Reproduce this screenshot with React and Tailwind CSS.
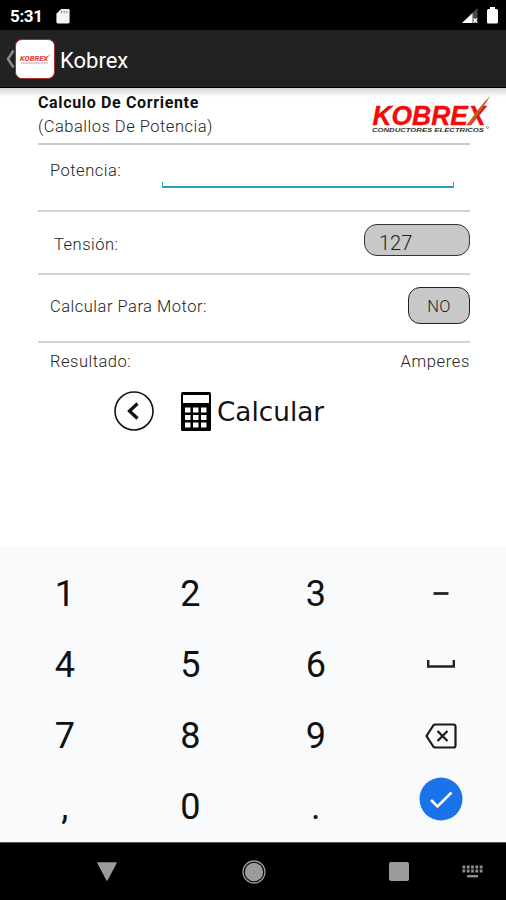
function StatusBar() {
    return (
        <div className="flex h-[30px] items-center bg-black pt-px pl-[10px] pr-[8px] text-white">
            <span className="w-[46px] text-[17px] leading-[20px] font-bold tracking-[-0.020em]">5:31</span>

            <svg className="h-[16px] w-[14px]" viewBox="0 0 14 17">
                <path d="M5 1H12.5Q14 1 14 2.500V15Q14 16.500 12.500 16.500H1.500Q0 16.500 0 15V6Z" fill="#f4f4f4" />
                <path d="M5.500 3V5.500M8.300 3V5.500M11 3V5.500" stroke="#777" strokeWidth="1" />
            </svg>

            <div className="ml-auto flex gap-[9px]">
                <svg className="h-[17px] w-[16px]" viewBox="0 0 16 17">
                    <path d="M15.500 1V16H0Z" fill="#4a4a4a" />
                    <path d="M10.500 6V16H0Z" fill="#fff" />
                    <path d="M11.500 11.500L15 15.500M15 11.500L11.500 15.500" stroke="#fff" strokeWidth="1.500" />
                </svg>

                <svg className="h-[17px] w-[11px]" viewBox="0 0 11 17">
                    <path d="M3 0H8V2H9.500Q11 2 11 3.500V15Q11 16.500 9.500 16.500H1.500Q0 16.500 0 15V3.500Q0 2 1.500 2H3Z" fill="#fff" />
                </svg>
            </div>
        </div>
    )
}

function AppBar() {
    return (
        <header className="flex h-[58px] items-center border-b border-b-black bg-[#222222] pl-[5px] text-white">
            <svg className="h-[20px] w-[10px]" viewBox="0 0 10 20">
                <path d="M8.500 1.500L3 10L8.500 18.500" fill="none" stroke="#8a8a8a" strokeWidth="2.500" />
            </svg>

            <div className="flex h-[40px] w-[40px] items-center justify-center rounded-[7px] border border-[#a83228] bg-white">
                <svg className="h-[12px] w-[32px]" viewBox="0 0 32 12">
                    <text x="1" y="8" textLength="28" lengthAdjust="spacingAndGlyphs" fontSize="8" fontWeight="bold" fontStyle="italic" fill="#e5383b">KOBREX</text>
                    <path d="M2 10H29" stroke="#999" strokeWidth="0.800" />
                    <path d="M26 7.500L31 1" stroke="#c98a55" strokeWidth="0.800" />
                </svg>
            </div>

            <h1 className="ml-[5px] pt-[4px] text-[22px] leading-[28px]">Kobrex</h1>
        </header>
    )
}

function Logo() {
    return (
        <svg className="mt-[6px] h-[40px] w-[126px] overflow-visible" viewBox="0 0 126 40" fontFamily="Liberation Sans">
            <text x="4.500" y="30.500" textLength="113" lengthAdjust="spacingAndGlyphs" fontSize="28" fontWeight="bold" fontStyle="italic" fill="#f5090b" stroke="#f5090b" strokeWidth="0.400">KOBREX</text>
            <path d="M99.500 31Q109 15 122.500 1.500Q114 16 102 31Z" fill="#bd681c" />
            <text x="4" y="37.500" textLength="112" lengthAdjust="spacingAndGlyphs" fontSize="5.500" fontWeight="bold" fontStyle="italic" fill="#333">CONDUCTORES ELECTRICOS</text>
            <circle cx="119.500" cy="33.500" r="1" fill="none" stroke="#555" strokeWidth="0.700" />
        </svg>
    )
}

function Form() {
    return (
        <main className="h-[458px] bg-linear-to-b from-[#d5d5d5] to-white to-[9px] pl-[38px]">
            <div className="mr-[36px] flex h-[57px] justify-between border-b-2 border-[#cbcbcb]">
                <div className="pt-[3px] leading-[24px]">
                    <h2 className="text-[16px] font-bold tracking-[0.650px] text-[#111]">Calculo De Corriente</h2>
                    <p className="text-[16.500px] font-light tracking-[0.500px] text-[#222]">(Caballos De Potencia)</p>
                </div>
                <div className="mr-[-24px]">
                    <Logo />
                </div>
            </div>

            <div className="mr-[36px] flex h-[67px] justify-between border-b-2 border-[#d2d2d2] pr-[16px] pl-[12px] text-[#222]">
                <label className="pt-[14px] text-[16.500px] leading-[24px] font-light tracking-[0.500px]">Potencia:</label>
                <div className="mt-[37px] h-[6px] w-[292px] border-x border-b-2 border-[#2d9fc3]"></div>
            </div>

            <div className="mr-[36px] flex h-[63px] justify-between border-b-2 border-[#d2d2d2] pl-[16px] text-[#222]">
                <span className="pt-[21px] text-[16.500px] leading-[24px] font-light tracking-[0.500px]">Tensión:</span>
                <div className="mt-[12px] h-[32px] w-[106px] rounded-[13px] border border-[#333] bg-[#c8c8c8] pt-[5px] pl-[14px] text-[20px] leading-[26px] font-light">127</div>
            </div>

            <div className="mr-[36px] flex h-[68px] justify-between border-b-2 border-[#d2d2d2] pl-[12px] text-[#222]">
                <span className="pt-[20px] text-[16.500px] leading-[24px] font-light tracking-[0.500px]">Calcular Para Motor:</span>
                <button className="mt-[12px] h-[37px] w-[62px] rounded-[12px] border border-[#222] bg-[#c8c8c8] pt-[3px] text-[16.500px] font-light tracking-[0.200px]">NO</button>
            </div>

            <div className="mr-[36px] flex justify-between pt-[7px] pl-[12px] text-[16.500px] leading-[24px] font-light tracking-[0.500px] text-[#222]">
                <span>Resultado:</span>
                <span className="tracking-[0.650px]">Amperes</span>
            </div>

            <div className="mt-[17px] flex items-center pl-[76px]">
                <svg className="h-[40px] w-[40px]" viewBox="0 0 40 40" fill="none" stroke="#111">
                    <circle cx="20" cy="20" r="19" strokeWidth="1.600" />
                    <path d="M23.500 12.500L15.500 20L23.500 27.500" strokeWidth="3.200" />
                </svg>

                <svg className="ml-[27px] h-[39px] w-[30px]" viewBox="0 0 30 39">
                    <rect width="30" height="39" rx="1.500" fill="#000" />
                    <path d="M2 3H28V11H2ZM4 15.500H9.500V20.500H4ZM12 15.500H17.500V20.500H12ZM20 15.500H25.500V20.500H20ZM4 23H9.500V28H4ZM12 23H17.500V28H12ZM20 23H25.500V28H20ZM4 30.500H9.500V35.500H4ZM12 30.500H17.500V35.500H12ZM20 30.500H25.500V35.500H20Z" fill="#fff" />
                </svg>

                <span className="ml-[6px] pt-[3px] font-['DejaVu_Sans'] text-[26.300px] leading-[37px] text-[#111]">Calcular</span>
            </div>
        </main>
    )
}

function Keypad() {
    const key = "flex items-center justify-center"

    return (
        <div className="grid h-[296px] grid-cols-4 grid-rows-[repeat(4,71px)] bg-[#f8fafc] px-[2px] pt-[12px] text-[36px] text-[#111]">
            <div className={key}>1</div>
            <div className={key}>2</div>
            <div className={key}>3</div>
            <div className={key}>
                <svg className="h-[4px] w-[16px]" viewBox="0 0 16 4">
                    <path d="M0.500 1.500H15.500" stroke="#222" strokeWidth="2.800" />
                </svg>
            </div>

            <div className={key}>4</div>
            <div className={key}>5</div>
            <div className={key}>6</div>
            <div className={key}>
                <svg className="mb-[2px] h-[8px] w-[28px]" viewBox="0 0 28 8">
                    <path d="M1.200 0V6.500H26.800V0" fill="none" stroke="#222" strokeWidth="2.400" />
                </svg>
            </div>

            <div className={key}>7</div>
            <div className={key}>8</div>
            <div className={key}>9</div>
            <div className={key}>
                <svg className="h-[26px] w-[32px]" viewBox="0 0 32 26" fill="none" stroke="#1a1a1a">
                    <path d="M10 1.500H28.500Q30.500 1.500 30.500 3.500V22.500Q30.500 24.500 28.500 24.500H10Q9 24.500 8.300 23.500L1.500 13L8.300 2.500Q9 1.500 10 1.500Z" strokeWidth="2.200" />
                    <path d="M12.500 8L22.500 18M22.500 8L12.500 18" strokeWidth="2.200" />
                </svg>
            </div>

            <div className={key}>,</div>
            <div className={key}>0</div>
            <div className={key}>.</div>
            <div className="flex items-start justify-center pt-[6px]">
                <svg className="h-[44px] w-[44px]" viewBox="0 0 44 44">
                    <circle cx="22" cy="22" r="21.500" fill="#1a73e8" />
                    <path d="M12 23L18.500 29.500L32.500 15.500" fill="none" stroke="#fff" strokeWidth="2.600" />
                </svg>
            </div>
        </div>
    )
}

function NavBar() {
    return (
        <nav className="flex h-[58px] items-center border-t border-t-[#555] bg-black pl-[96px]">
            <svg className="h-[20px] w-[22px]" viewBox="0 0 22 20">
                <path d="M2 1H20L11 18Z" fill="#9b9b9b" stroke="#9b9b9b" strokeWidth="1.500" strokeLinejoin="round" />
            </svg>

            <svg className="ml-[124px] h-[24px] w-[24px]" viewBox="0 0 24 24">
                <circle cx="12" cy="12" r="11" fill="none" stroke="#999" strokeWidth="1.300" />
                <circle cx="12" cy="12" r="9.200" fill="#9b9b9b" />
            </svg>

            <div className="ml-[123px] h-[19px] w-[20px] rounded-[2px] bg-[#9b9b9b]"></div>

            <svg className="ml-[53px] h-[13px] w-[21px]" viewBox="0 0 21 13">
                <path d="M0.500 2H20.500M0.500 6H20.500" stroke="#8d8d8d" strokeWidth="3" strokeDasharray="2.800 1.500" />
                <path d="M5 11.200H16" stroke="#8d8d8d" strokeWidth="2.400" />
            </svg>
        </nav>
    )
}

export default function App() {
    return (
        <div className="h-[900px] w-[506px] overflow-hidden bg-white font-['Roboto',sans-serif]">
            <StatusBar />
            <AppBar />
            <Form />
            <Keypad />
            <NavBar />
        </div>
    )
}
